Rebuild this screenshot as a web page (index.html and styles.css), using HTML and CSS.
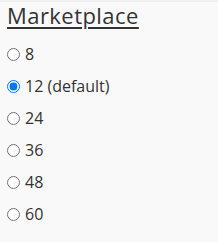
FILE: index.html
```html
<!DOCTYPE html>
<html lang="en">
<head>
    <meta charset="UTF-8">
    <meta name="viewport" content="width=device-width, initial-scale=1.0">
    <title>Marketplace</title>
    <link rel="stylesheet" href="styles.css">
</head>
<body>
    <div class="panel">
        <h2 class="panel-title">Marketplace</h2>
        <div class="options">
            <label class="option"><input type="radio" name="size" value="8"><span>8</span></label>
            <label class="option"><input type="radio" name="size" value="12" checked><span>12 (default)</span></label>
            <label class="option"><input type="radio" name="size" value="24"><span>24</span></label>
            <label class="option"><input type="radio" name="size" value="36"><span>36</span></label>
            <label class="option"><input type="radio" name="size" value="48"><span>48</span></label>
            <label class="option"><input type="radio" name="size" value="60"><span>60</span></label>
        </div>
    </div>
</body>
</html>
```

FILE: styles.css
```css
* {
    margin: 0;
    padding: 0;
    box-sizing: border-box;
}

body {
    font-family: 'Open Sans', sans-serif;
    background: linear-gradient(#efefef, #efefef) top / 100% 2px no-repeat, #f9f9f9;
    color: #333;
    min-height: 100vh;
}

.panel {
    padding: 0 7px;
}

.panel-title {
    font-size: 22px;
    font-weight: normal;
    line-height: 30px;
    letter-spacing: 0.45px;
    text-decoration: underline;
    text-decoration-thickness: 2px;
    text-underline-offset: 3px;
    margin-bottom: 8px;
}

.options {
    display: flex;
    flex-direction: column;
}

.option {
    display: flex;
    align-items: center;
    height: 32px;
    font-size: 16px;
    cursor: pointer;
}

.option input {
    width: 13px;
    height: 13px;
    margin: 0 5px 0 0;
}
```
